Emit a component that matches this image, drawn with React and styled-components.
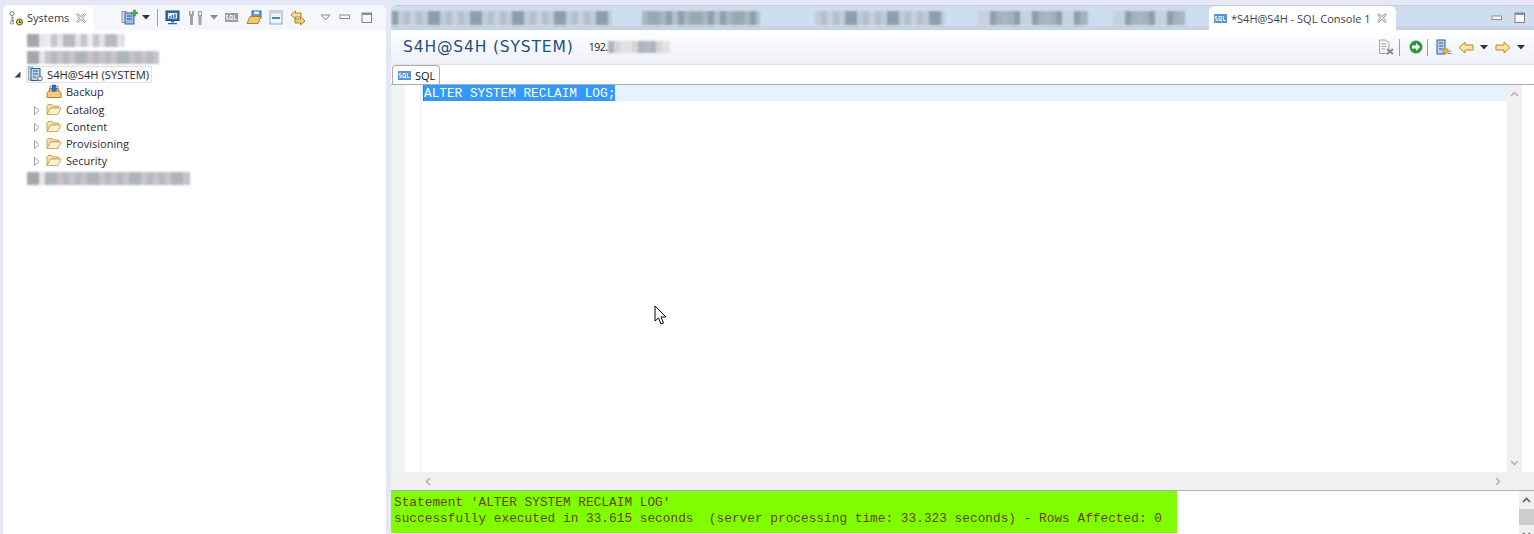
import React from "react";
import styled, { createGlobalStyle } from "styled-components";

const GlobalStyle = createGlobalStyle`
  html, body {
    margin: 0;
    padding: 0;
    background: #e4e7f6;
    overflow: hidden;
  }
  svg {
    flex: none;
  }
`;

const Page = styled.div`
  position: relative;
  display: flex;
  width: 1534px;
  height: 534px;
  padding: 5px 0 0 3px;
  box-sizing: border-box;
  gap: 5px;
  background: #e4e7f6;
  font-family: "Open Sans", "Noto Sans", sans-serif;
  font-size: 11px;
  color: #2b2b33;
  overflow: hidden;
`;

const LeftPanel = styled.div`
  width: 383px;
  flex: none;
  display: flex;
  flex-direction: column;
  background: #fff;
  border-radius: 6px 6px 0 0;
`;

const LeftHeader = styled.div`
  height: 25px;
  display: flex;
  background: #f6f7fc;
  border-radius: 6px 6px 0 0;
`;

const ViewTab = styled.div`
  width: 90px;
  flex: none;
  display: flex;
  align-items: center;
  padding-left: 5px;
  box-sizing: border-box;
  background: #fff;
  border-radius: 6px 6px 0 0;
  color: #333a44;
`;

const TabLabel = styled.span`
  margin: 0 6px 0 ${(p) => p.$ml || 3}px;
  white-space: nowrap;
`;

const Toolbar = styled.div`
  display: flex;
  align-items: center;
  margin-left: 27px;
`;

const Slot = styled.div`
  width: ${(p) => p.$w}px;
  height: 100%;
  flex: none;
  display: flex;
  align-items: center;
  justify-content: center;
`;

const Sep = styled.div`
  width: 1px;
  height: 17px;
  flex: none;
  margin: 0 ${(p) => p.$r ?? 4}px 0 ${(p) => p.$l ?? 4}px;
  background: #9aa0a8;
`;

const Tree = styled.div`
  display: flex;
  flex-direction: column;
  padding-top: 1.5px;
`;

const TreeRow = styled.div`
  height: 17.25px;
  display: flex;
  align-items: center;
  padding-left: ${(p) => p.$indent}px;
  white-space: nowrap;
`;

const Twisty = styled.div`
  width: 10px;
  flex: none;
  display: flex;
  justify-content: center;
  margin-top: ${(p) => p.$mt || 0}px;
  margin-right: ${(p) => p.$mr || 4}px;
`;

const Selected = styled.div`
  display: flex;
  align-items: center;
  gap: 3px;
  height: 17px;
  padding: 0 0 0 1px;
  width: 126px;
  box-sizing: border-box;
  border: 1px solid #dfe1e6;
  background: #fbfbfc;
  font-size: 11.2px;
`;

const ChildLabel = styled.span`
  margin-left: 4px;
`;

const Smudge = styled.div`
  display: flex;
  height: ${(p) => p.$h || 13}px;
  width: ${(p) => p.$w}px;
  margin-left: ${(p) => p.$ml || 0}px;
  flex: none;
  overflow: hidden;
  filter: blur(1px);
`;

const Cell = styled.i`
  width: 6px;
  flex: none;
  background: ${(p) => p.$tone};
`;

const RightPanel = styled.div`
  flex: 1;
  min-width: 0;
  display: flex;
  flex-direction: column;
`;

const EditorTabs = styled.div`
  height: 25px;
  flex: none;
  display: flex;
  align-items: center;
  padding-left: 1px;
  background: linear-gradient(#cfdeee 0 20px, #c6d3e6 20px);
  border-top: 1px solid #c6ccdc;
  box-sizing: border-box;
  border-radius: 6px 0 0 0;
`;

const ActiveTab = styled.div`
  width: 187px;
  height: 25px;
  flex: none;
  display: flex;
  align-items: center;
  padding-left: 5px;
  box-sizing: border-box;
  background: #fff;
  border-radius: 6px 6px 0 0;
  color: #3a414c;
`;

const FormHeader = styled.div`
  height: 35px;
  flex: none;
  display: flex;
  align-items: center;
  background: linear-gradient(#fff, #eef0f8);
  border-bottom: 1px solid #dfe3ee;
  box-sizing: border-box;
  padding-left: 12px;
`;

const FormTitle = styled.span`
  font-family: "DejaVu Sans", sans-serif;
  font-size: 15.5px;
  letter-spacing: 0.85px;
  color: #1d4f80;
  white-space: nowrap;
`;

const Host = styled.span`
  margin-left: 15px;
  font-size: 10.5px;
  letter-spacing: -0.4px;
  color: #222;
`;

const HeaderTools = styled.div`
  margin-left: auto;
  height: 100%;
  display: flex;
  align-items: center;
  padding-right: 6px;
`;

const SubTabs = styled.div`
  height: 20px;
  flex: none;
  display: flex;
  align-items: flex-end;
  padding-left: 1px;
  background: #fff;
  border-bottom: 1px solid #a9abaf;
  box-sizing: border-box;
`;

const SubTab = styled.div`
  width: 48px;
  height: 19px;
  display: flex;
  align-items: center;
  gap: 4px;
  padding-left: 5px;
  box-sizing: border-box;
  border: 1px solid #a9abaf;
  border-bottom: none;
  border-radius: 4px 4px 0 0;
  color: #111;
`;

const EditorBody = styled.div`
  flex: 1;
  min-height: 0;
  display: grid;
  grid-template-columns: 1fr 15px 12px;
  grid-template-rows: 1fr 18px;
`;

const EditorMain = styled.div`
  display: flex;
  min-width: 0;
  background: #fff;
`;

const Gutter = styled.div`
  width: 14px;
  flex: none;
  background: #f3f3f3;
`;

const Numbers = styled.div`
  width: 16px;
  flex: none;
  border-right: 1px solid #eef0f2;
  box-sizing: border-box;
`;

const Lines = styled.div`
  flex: 1;
  min-width: 0;
`;

const CurrentLine = styled.div`
  height: 16px;
  padding-left: 2px;
  display: flex;
  background: #e8f2fe;
`;

const Sql = styled.span`
  border-left: 1px solid #c2570c;
  background: #3399ff;
  color: #fff;
  font-family: "Liberation Mono", monospace;
  font-size: 12.75px;
  line-height: 18px;
  white-space: pre;
`;

const VScroll = styled.div`
  display: flex;
  flex-direction: column;
  justify-content: space-between;
  align-items: center;
  padding: 5px 0;
  box-sizing: border-box;
  background: #f0f0f0;
`;

const Margin = styled.div`
  background: #fff;
`;

const HScroll = styled.div`
  display: flex;
  justify-content: space-between;
  align-items: center;
  padding: 0 5px 0 33px;
  background: #f0f0f0;
`;

const Corner = styled.div`
  grid-column: 2 / 4;
  background: #f0f0f0;
`;

const ResultArea = styled.div`
  height: 44px;
  flex: none;
  display: flex;
  justify-content: space-between;
  background: #fff;
  border-top: 1px solid #aab0c0;
  box-sizing: border-box;
`;

const Message = styled.div`
  width: 786px;
  height: 42px;
  padding: 4px 0 0 3px;
  box-sizing: border-box;
  background: #80ff00;
  color: #664400;
  font-family: "Liberation Mono", monospace;
  font-size: 12.8px;
  line-height: 16px;
  white-space: pre;
`;

const ResultScroll = styled.div`
  width: 15px;
  display: flex;
  flex-direction: column;
  align-items: stretch;
  background: #f0f0f0;
`;

const ScrollBtn = styled.div`
  height: 18px;
  flex: none;
  display: flex;
  align-items: center;
  justify-content: center;
`;

const Thumb = styled.div`
  height: 16px;
  flex: none;
  background: #cdcdcd;
`;

const Pointer = styled.svg`
  position: absolute;
  left: 654px;
  top: 305px;
`;

const TONES = ["#c3c5ca", "#d4d5d9", "#e2e2e5", "#b6b9bf", "#ebebed", "#c9c3c9", "#adb5bb"];
const TAB_TONES = ["#b3bfcc", "#a3b0bd", "#bfcbd8", "#8f9eac", "#c5d1df", "#aab4c3", "#98a8b2"];

// mosaic for the blurred-out names
const Mosaic = ({ w, h, ml, seed, tones = TONES, lead }) => {
  const n = Math.ceil(w / 6);
  const cells = [];
  for (let i = 0; i < n; i++) {
    let tone = tones[(i * i * 3 + i * seed + seed) % tones.length];
    if (lead && i < 2) tone = "#a4a6ab";
    if (lead && i === 2) tone = "#e6e6e8";
    cells.push(<Cell key={i} $tone={tone} />);
  }
  return <Smudge $w={w} $h={h} $ml={ml}>{cells}</Smudge>;
};

const Close = () => (
  <svg width="12" height="12" viewBox="0 0 12 12" fill="#f4f4f4" stroke="#8c9096">
    <path d="M1.5 2.5 L2.5 1.5 L6 4.5 L9.5 1.5 L10.5 2.5 L7.5 6 L10.5 9.5 L9.5 10.5 L6 7.5 L2.5 10.5 L1.5 9.5 L4.5 6 Z" />
  </svg>
);

const Drop = ({ c = "#333" }) => (
  <svg width="8" height="5" viewBox="0 0 8 5"><path d="M0 0 H8 L4 4.5 Z" fill={c} /></svg>
);

const Min = () => (
  <svg width="12" height="7" viewBox="0 0 12 7"><rect x="1" y="1" width="9.5" height="3.5" fill="#f7f7f7" stroke="#8a8e94" /></svg>
);

const Max = () => (
  <svg width="12" height="12" viewBox="0 0 12 12">
    <rect x="1" y="1" width="9.5" height="9.5" fill="#f7f7f7" stroke="#7f8388" />
    <rect x="1" y="1" width="9.5" height="2" fill="#8a8e94" />
  </svg>
);

const SystemsIcon = () => (
  <svg width="16" height="16" viewBox="0 0 16 16">
    <circle cx="4" cy="3.5" r="2" fill="#fff" stroke="#7a8288" />
    <path d="M4 5.5 V11 M4 8 H6 M4 10.5 H6" stroke="#7a8288" fill="none" />
    <circle cx="4" cy="12.5" r="1.6" fill="#fff" stroke="#7a8288" />
    <circle cx="11.5" cy="12" r="3" fill="#e8d44d" stroke="#55500f" />
    <path d="M11.5 10.5 V12.5 H13" stroke="#333" fill="none" />
  </svg>
);

const Folder = () => (
  <svg width="16" height="13" viewBox="0 0 16 13">
    <path d="M1 11.5 V2.5 L2 1.5 H6 L7 3 H12.5 V5 H4.5 Z" fill="#f6e0ad" stroke="#c9a35c" strokeLinejoin="round" />
    <path d="M1 11.5 L4.5 5 H15 L12 11.5 Z" fill="#fcf0d0" stroke="#d2a860" strokeLinejoin="round" />
  </svg>
);

const BackupIcon = () => (
  <svg width="16" height="16" viewBox="0 0 16 16">
    <path d="M3 7 L4.5 2 H11.5 L13 7 Z" fill="#dfe7f2" stroke="#a58445" />
    <path d="M1 9 L3 7 H13 L15 9 V13.5 H1 Z" fill="#f6cd80" stroke="#b57e27" strokeLinejoin="round" />
    <path d="M6.5 1 H9.5 V4.5 H11.5 L8 8 L4.5 4.5 H6.5 Z" fill="#2f72c4" stroke="#1c4f91" strokeWidth="0.6" />
  </svg>
);

const ServerIcon = () => (
  <svg width="16" height="17" viewBox="0 0 16 17">
    <rect x="0.5" y="1" width="4" height="13" fill="#d8dde3" stroke="#9aa0a6" />
    <rect x="3" y="2.5" width="9" height="12" fill="#bdd3ea" stroke="#2f5f96" />
    <path d="M5 5 H10 M5 8 H10 M5 11 H8" stroke="#2f5f96" fill="none" />
    <circle cx="12" cy="12.5" r="2.4" fill="#e5e7ea" stroke="#6e7276" />
  </svg>
);

const ConsoleServer = () => (
  <svg width="16" height="16" viewBox="0 0 16 16">
    <rect x="1" y="1" width="8" height="14" fill="#bdd3ea" stroke="#2f5f96" />
    <path d="M3 4 H7 M3 7 H7 M3 10 H7" stroke="#2f5f96" />
    <rect x="7" y="10" width="5" height="4" fill="#f0b83c" stroke="#b57e27" strokeWidth="0.7" />
    <path d="M12 12 H15.5 M12 14.5 H15.5" stroke="#8a8e94" />
  </svg>
);

const NewSystem = () => (
  <svg width="17" height="17" viewBox="0 0 17 17">
    <rect x="1" y="2.5" width="4" height="11" fill="#dde1e6" stroke="#8d949b" />
    <rect x="4" y="4" width="9" height="11" fill="#9bbde6" stroke="#3c659b" />
    <path d="M6 7 H11 M6 10 H11" stroke="#2f5f96" />
    <path d="M10.5 3 H12.5 V1 H14.5 V3 H16.5 V5 H14.5 V7 H12.5 V5 H10.5 Z" fill="#58b04a" stroke="#2d7a2a" strokeWidth="0.5" />
  </svg>
);

const Monitor = () => (
  <svg width="15" height="15" viewBox="0 0 15 15">
    <rect x="1" y="1" width="13" height="9.5" fill="#2f6ea8" stroke="#1d4a7a" />
    <rect x="3" y="3" width="9" height="5.5" fill="#e8f0f8" />
    <path d="M5 8 V6 M7.5 8 V5 M10 8 V4" stroke="#2f6ea8" strokeWidth="1.4" />
    <path d="M6 10.5 H9 V12.5 H6 Z M3 13 H12 V14.3 H3 Z" fill="#2f6ea8" />
  </svg>
);

const Tools = () => (
  <svg width="14" height="16" viewBox="0 0 14 16">
    <path d="M1.5 1 V4 H3 V1 L5 1 V5 L4 6.5 V15 H1 V6.5 L0 5 V1 Z" fill="#a2a2a2" />
    <path d="M9 1 H13 V6 L12.5 7.5 V15 H9.5 V7.5 L9 6 Z" fill="#a2a2a2" />
    <rect x="10" y="2" width="2" height="3" fill="#e4e4e4" />
  </svg>
);

const SqlBadge = ({ bg = "#9c9c9c" }) => (
  <svg width="13" height="9" viewBox="0 0 13 9">
    <rect width="13" height="9" fill={bg} />
    <path d="M3.2 2.5 H1.3 V4.5 H3.2 V6.5 H1.3 M5 2.5 H7.2 V6.5 H5 Z M6.4 5.5 L8 7.5 M9.3 2 V6.5 H11.8" stroke="#fff" strokeWidth="0.9" fill="none" />
  </svg>
);

const OpenFile = () => (
  <svg width="16" height="15" viewBox="0 0 16 15">
    <rect x="6" y="1" width="9" height="7" fill="#6d9ccc" stroke="#39689b" />
    <rect x="8" y="1.5" width="5" height="2.5" fill="#e6eef6" />
    <path d="M1 13.5 L4 6.5 H15 L12 13.5 Z" fill="#f4c96f" stroke="#b57e27" strokeLinejoin="round" />
  </svg>
);

const Collapse = () => (
  <svg width="14" height="15" viewBox="0 0 14 15">
    <rect x="1" y="1" width="12" height="13" fill="#eef3f9" stroke="#8ea5bf" />
    <rect x="3" y="7" width="8" height="2" fill="#4d86bf" />
    <rect x="1" y="1" width="12" height="2.5" fill="#c3d4e7" />
  </svg>
);

const LinkIcon = () => (
  <svg width="16" height="16" viewBox="0 0 16 16">
    <path d="M1 5 L5.5 1 V3 H11 V7 H5.5 V9 Z" fill="#f7df94" stroke="#a98526" strokeLinejoin="round" />
    <path d="M15 11 L10.5 15 V13 H5 V9 H10.5 V7 Z" fill="#f9cd73" stroke="#a98526" strokeLinejoin="round" />
  </svg>
);

const ClearDoc = () => (
  <svg width="16" height="16" viewBox="0 0 16 16">
    <path d="M1.5 1 H8 L11 4 V14.5 H1.5 Z" fill="#f4f4f4" stroke="#a8a8a8" />
    <path d="M3.5 5 H8 M3.5 7.5 H8 M3.5 10 H7" stroke="#a8a8a8" />
    <path d="M9 10 L15 15 M15 10 L9 15" stroke="#8a8a8a" strokeWidth="2" />
  </svg>
);

const Run = () => (
  <svg width="14" height="14" viewBox="0 0 14 14">
    <circle cx="7" cy="7" r="6.5" fill="#2c9a3a" />
    <path d="M3 5.5 H7 V3 L11 7 L7 11 V8.5 H3 Z" fill="#fff" />
  </svg>
);

const Arrow = ({ flip }) => (
  <svg width="16" height="13" viewBox="0 0 16 13" transform={flip ? "scale(-1 1)" : undefined}>
    <path d="M1 6.5 L7 1 V4 H15 V9 H7 V12 Z" fill="#fbe3a2" stroke="#c08a22" strokeLinejoin="round" />
  </svg>
);

const Chevron = ({ d, c = "#b4b4b4" }) => (
  <svg width="9" height="9" viewBox="0 0 9 9">
    <path d={d} fill="none" stroke={c} strokeWidth="1.6" />
  </svg>
);

const Open = () => (
  <svg width="7" height="7" viewBox="0 0 7 7"><path d="M6.5 0.5 V6.5 H0.5 Z" fill="#444" /></svg>
);

const Closed = () => (
  <svg width="6" height="9" viewBox="0 0 6 9"><path d="M0.5 0.5 L5 4.5 L0.5 8.5 Z" fill="#fff" stroke="#a0a0a0" /></svg>
);

const CHILDREN = ["Catalog", "Content", "Provisioning", "Security"];

const App = () => (
  <Page>
    <GlobalStyle />
    <LeftPanel>
      <LeftHeader>
        <ViewTab>
          <SystemsIcon />
          <TabLabel $ml={3}>Systems</TabLabel>
          <Close />
        </ViewTab>
        <Toolbar>
          <Slot $w={19}><NewSystem /></Slot>
          <Slot $w={14}><Drop /></Slot>
          <Sep />
          <Slot $w={20}><Monitor /></Slot>
          <Slot $w={28}><Tools /></Slot>
          <Slot $w={8}><Drop c="#888" /></Slot>
          <Slot $w={27}><SqlBadge /></Slot>
          <Slot $w={18}><OpenFile /></Slot>
          <Slot $w={26}><Collapse /></Slot>
          <Slot $w={17}><LinkIcon /></Slot>
          <Slot $w={9} />
          <Slot $w={20}>
            <svg width="11" height="7" viewBox="0 0 11 7"><path d="M1 1 H10 L5.5 6 Z" fill="#f4f4f4" stroke="#8a8e94" /></svg>
          </Slot>
          <Slot $w={19}><Min /></Slot>
          <Slot $w={26}><Max /></Slot>
        </Toolbar>
      </LeftHeader>
      <Tree>
        <TreeRow $indent={24}><Mosaic w={97} seed={3} lead /></TreeRow>
        <TreeRow $indent={24}><Mosaic w={132} seed={5} lead /></TreeRow>
        <TreeRow $indent={9}>
          <Twisty $mr={4}><Open /></Twisty>
          <Selected><ServerIcon />S4H@S4H (SYSTEM)</Selected>
        </TreeRow>
        <TreeRow $indent={43}>
          <BackupIcon />
          <ChildLabel>Backup</ChildLabel>
        </TreeRow>
        {CHILDREN.map((name) => (
          <TreeRow key={name} $indent={29}>
            <Twisty $mr={4} $mt={2}><Closed /></Twisty>
            <Folder />
            <ChildLabel>{name}</ChildLabel>
          </TreeRow>
        ))}
        <TreeRow $indent={24}><Mosaic w={163} seed={7} lead /></TreeRow>
      </Tree>
    </LeftPanel>

    <RightPanel>
      <EditorTabs>
        <Mosaic w={220} h={14} seed={3} tones={TAB_TONES} />
        <Mosaic w={118} h={14} ml={30} seed={5} tones={TAB_TONES} />
        <Mosaic w={130} h={14} ml={55} seed={9} tones={TAB_TONES} />
        <Mosaic w={110} h={14} ml={33} seed={4} tones={TAB_TONES} />
        <Mosaic w={72} h={14} ml={25} seed={11} tones={TAB_TONES} />
        <Slot $w={24} />
        <ActiveTab>
          <SqlBadge bg="#5b93d6" />
          <TabLabel $ml={4}>*S4H@S4H - SQL Console 1</TabLabel>
          <Close />
        </ActiveTab>
        <Slot $w={94} />
        <Slot $w={14}><Min /></Slot>
        <Slot $w={9} />
        <Slot $w={14}><Max /></Slot>
      </EditorTabs>
      <FormHeader>
        <FormTitle>S4H@S4H (SYSTEM)</FormTitle>
        <Host>192.</Host>
        <Mosaic w={62} h={12} seed={6} />
        <HeaderTools>
          <Slot $w={18}><ClearDoc /></Slot>
          <Sep $l={4} $r={9} />
          <Slot $w={14}><Run /></Slot>
          <Sep $l={4} $r={4} />
          <Slot $w={24}><ConsoleServer /></Slot>
          <Slot $w={20}><Arrow /></Slot>
          <Slot $w={15}><Drop /></Slot>
          <Slot $w={23}><Arrow flip /></Slot>
          <Slot $w={14}><Drop /></Slot>
        </HeaderTools>
      </FormHeader>
      <SubTabs>
        <SubTab><SqlBadge bg="#5b93d6" />SQL</SubTab>
      </SubTabs>
      <EditorBody>
        <EditorMain>
          <Gutter />
          <Numbers />
          <Lines>
            <CurrentLine><Sql>ALTER SYSTEM RECLAIM LOG;</Sql></CurrentLine>
          </Lines>
        </EditorMain>
        <VScroll>
          <Chevron d="M1 6 L4.5 2.5 L8 6" />
          <Chevron d="M1 3 L4.5 6.5 L8 3" />
        </VScroll>
        <Margin />
        <HScroll>
          <Chevron d="M6 1 L2.5 4.5 L6 8" />
          <Chevron d="M3 1 L6.5 4.5 L3 8" />
        </HScroll>
        <Corner />
      </EditorBody>
      <ResultArea>
        <Message>{"Statement 'ALTER SYSTEM RECLAIM LOG'\nsuccessfully executed in 33.615 seconds  (server processing time: 33.323 seconds) - Rows Affected: 0"}</Message>
        <ResultScroll>
          <ScrollBtn><Chevron d="M1 6 L4.5 2.5 L8 6" c="#606060" /></ScrollBtn>
          <Thumb />
          <ScrollBtn><Chevron d="M1 3 L4.5 6.5 L8 3" c="#606060" /></ScrollBtn>
        </ResultScroll>
      </ResultArea>
    </RightPanel>

    <Pointer width="14" height="20" viewBox="0 0 14 20">
      <path d="M1 1 V16 L4.5 13 L7 19 L9.5 18 L7 12 H12 Z" fill="#fff" stroke="#000" strokeLinejoin="round" />
    </Pointer>
  </Page>
);

export default App;
